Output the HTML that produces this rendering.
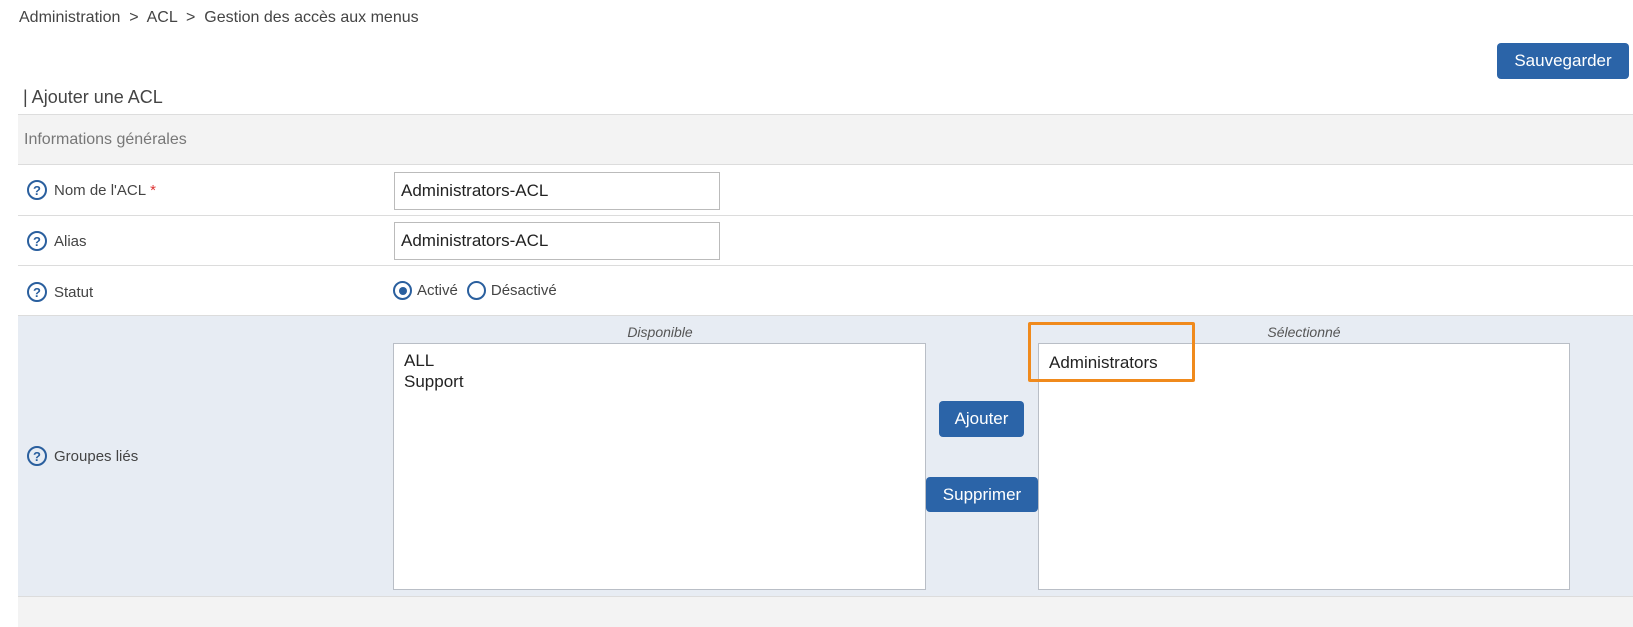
<!DOCTYPE html>
<html><head><meta charset="utf-8"><style>
*{box-sizing:border-box;margin:0;padding:0}
body{width:1633px;height:616px;background:#fff;font-family:"Liberation Sans",sans-serif;position:relative;overflow:hidden;color:#333}
.a{position:absolute}
.row{position:absolute;left:18px;right:0;border-bottom:1px solid #dcdcdc}
.lbl{position:absolute;left:27px;font-size:15px;color:#444;display:flex;align-items:center}
.q{width:20px;height:20px;border:2px solid #2a5f9e;border-radius:50%;color:#2a5f9e;font-size:13px;font-weight:bold;display:flex;align-items:center;justify-content:center;margin-right:7px}
.inp{position:absolute;left:394px;width:326px;height:38px;border:1px solid #bbb;font-size:17px;padding-left:6px;line-height:36px;color:#222;background:#fff}
.btn{position:absolute;background:#2b64a8;color:#fff;border-radius:4px;font-size:17px;display:flex;align-items:center;justify-content:center}
.lb{position:absolute;top:343px;height:247px;background:#fff;border:1px solid #b9bec6;font-size:17px;line-height:21px;padding:6px 10px;color:#222}
.cap{position:absolute;top:324px;font-size:14px;font-style:italic;color:#555;text-align:center}
.radio{width:19px;height:19px;border:2px solid #2a5f9e;border-radius:50%;display:inline-block;position:relative;margin-right:5px}
</style></head><body>
<div class="a" style="left:19px;top:9px;font-size:16px;color:#444">Administration &nbsp;&gt;&nbsp; ACL &nbsp;&gt;&nbsp; Gestion des accès aux menus</div>
<div class="btn" style="left:1497px;top:43px;width:132px;height:36px">Sauvegarder</div>
<div class="a" style="left:23px;top:87px;font-size:18px;color:#444">| Ajouter une ACL</div>
<div class="row" style="top:114px;height:51px;background:#f3f3f3;border-top:1px solid #ddd"></div>
<div class="a" style="left:24px;top:131px;font-size:16px;color:#777">Informations générales</div>
<div class="row" style="top:165px;height:51px"></div>
<div class="lbl" style="top:180px"><span class="q">?</span>Nom de l'ACL <span style="color:#d33;margin-left:4px">*</span></div>
<div class="inp" style="top:172px">Administrators-ACL</div>
<div class="row" style="top:216px;height:50px"></div>
<div class="lbl" style="top:231px"><span class="q">?</span>Alias</div>
<div class="inp" style="top:222px">Administrators-ACL</div>
<div class="row" style="top:266px;height:50px"></div>
<div class="lbl" style="top:282px"><span class="q">?</span>Statut</div>
<div class="a" style="left:393px;top:281px;font-size:15px;color:#444;display:flex;align-items:center"><span class="radio"><span style="position:absolute;left:3.5px;top:3.5px;width:8px;height:8px;border-radius:50%;background:#2a5f9e"></span></span>Activé<span class="radio" style="margin-left:9px"></span>Désactivé</div>
<div class="row" style="top:316px;height:281px;background:#e7ecf3"></div>
<div class="lbl" style="top:446px"><span class="q">?</span>Groupes liés</div>
<div class="cap" style="left:394px;width:532px">Disponible</div>
<div class="cap" style="left:1038px;width:532px">Sélectionné</div>
<div class="lb" style="left:393px;width:533px">ALL<br>Support</div>
<div class="lb" style="left:1038px;width:532px;padding-top:8px">Administrators</div>
<div class="btn" style="left:939px;top:401px;width:85px;height:36px">Ajouter</div>
<div class="btn" style="left:926px;top:477px;width:112px;height:35px">Supprimer</div>
<div class="a" style="left:1028px;top:322px;width:167px;height:60px;border:3px solid #f08a1c;border-radius:2px"></div>
<div class="row" style="top:597px;height:30px;background:#f3f3f3;border:none"></div>
</body></html>
